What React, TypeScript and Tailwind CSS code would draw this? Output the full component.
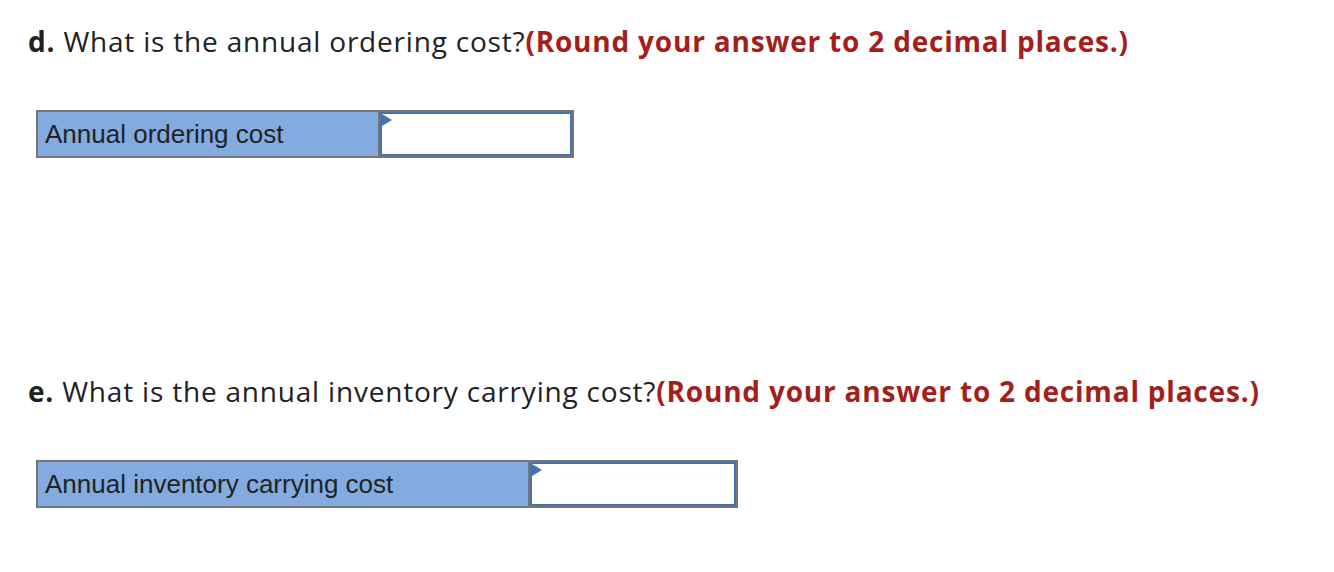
export default function App() {
  return (
    <div className="w-[1334px] h-[572px] bg-white text-[#222] overflow-hidden" style={{ fontFamily: "'Open Sans', Lato, sans-serif" }}>
      <Question
        letter="d."
        text="What is the annual ordering cost?"
        label="Annual ordering cost"
        labelWidth="w-[342px]"
        inputWidth="w-[192px]"
        top="pt-[22px]"
      />
      <Question
        letter="e."
        text="What is the annual inventory carrying cost?"
        label="Annual inventory carrying cost"
        labelWidth="w-[492px]"
        inputWidth="w-[206px]"
        top="pt-[214px]"
      />
    </div>
  );
}

function Question(props: {
  letter: string;
  text: string;
  label: string;
  labelWidth: string;
  inputWidth: string;
  top: string;
}) {
  return (
    <div className={`${props.top} pl-[28px]`}>
      <p className="text-[28px] leading-[38px] tracking-[0.8px] whitespace-nowrap">
        <b className="font-bold">{props.letter}</b> {props.text}
        <span className="font-bold text-[#a41f1b]">(Round your answer to 2 decimal places.)</span>
      </p>
      <div className="ml-[8px] mt-[50px] flex h-[48px] w-fit border-2 border-[#767676]">
        <div
          className={`${props.labelWidth} flex items-center bg-[#83abdf] pl-[7px] text-[26px] border-r-2 border-[#767676]`}
          style={{ fontFamily: "'Liberation Sans', Arial, sans-serif" }}
        >
          {props.label}
        </div>
        <div className={`${props.inputWidth} relative border-2 border-[#4673b0] bg-white`}>
          <svg className="absolute left-0 top-0" width="10" height="12" viewBox="0 0 10 12">
            <polygon points="0,0 10,6 0,12" fill="#4673b0" />
          </svg>
        </div>
      </div>
    </div>
  );
}
